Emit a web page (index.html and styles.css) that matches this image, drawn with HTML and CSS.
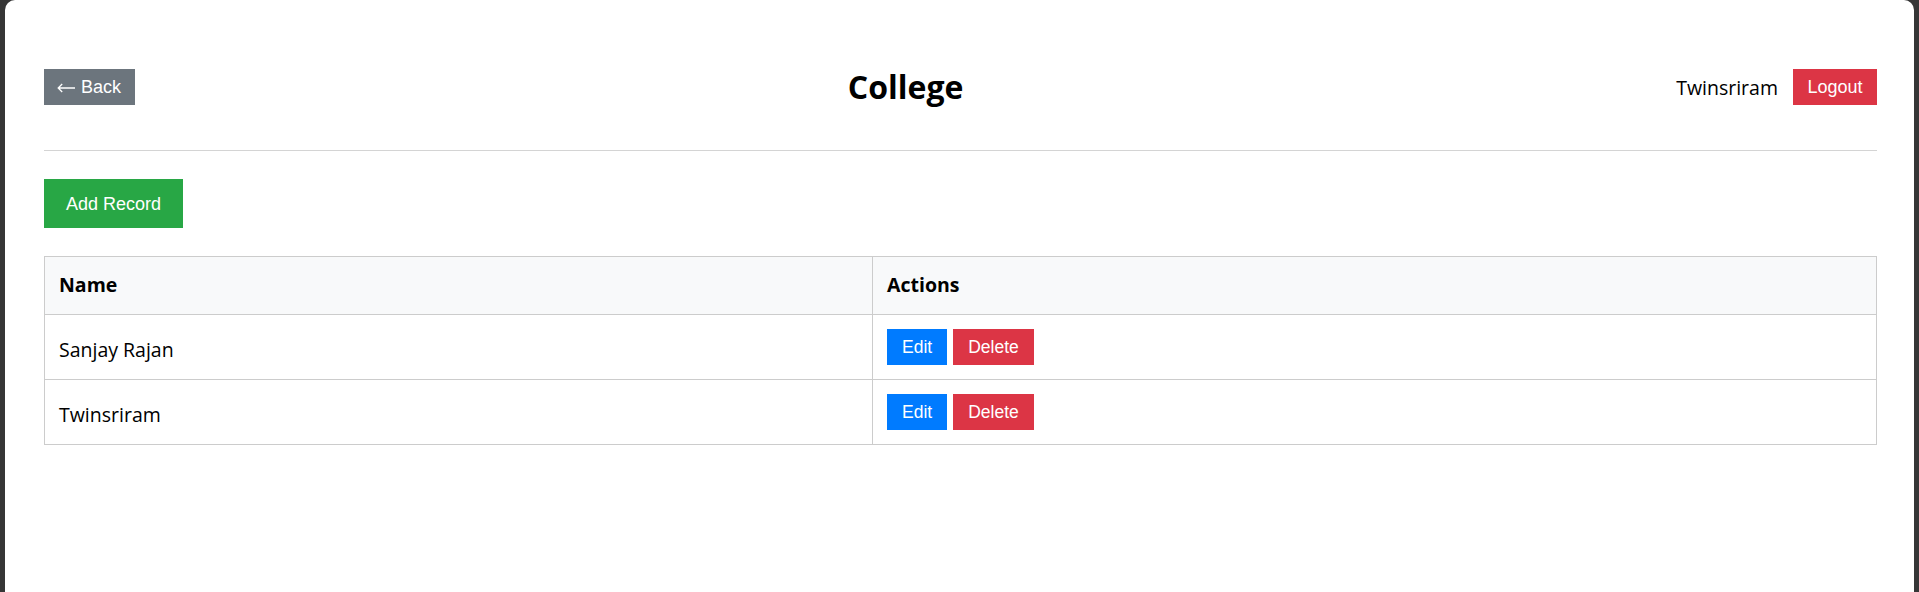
FILE: index.html
```html
<!DOCTYPE html>
<html lang="en">
<head>
<meta charset="utf-8">
<title>College</title>
<link rel="stylesheet" href="styles.css">
</head>
<body>
<div class="window">
  <header class="header">
    <button class="btn btn-back"><svg class="arrow" width="18" height="10" viewBox="0 0 18 10"><path d="M1.2 5 H18 M5.2 1 L1.2 5 L5.2 9" fill="none" stroke="#fff" stroke-width="1.3"/></svg><span>Back</span></button>
    <h1 class="title">College</h1>
    <div class="user">
      <span class="username">Twinsriram</span>
      <button class="btn btn-logout">Logout</button>
    </div>
  </header>
  <button class="btn btn-add">Add Record</button>
  <table class="records">
    <thead>
      <tr><th class="col-name">Name</th><th>Actions</th></tr>
    </thead>
    <tbody>
      <tr>
        <td class="cell-name">Sanjay Rajan</td>
        <td><div class="actions"><button class="btn btn-edit">Edit</button><button class="btn btn-delete">Delete</button></div></td>
      </tr>
      <tr>
        <td class="cell-name">Twinsriram</td>
        <td><div class="actions"><button class="btn btn-edit">Edit</button><button class="btn btn-delete">Delete</button></div></td>
      </tr>
    </tbody>
  </table>
</div>
</body>
</html>
```

FILE: styles.css
```css
html, body {
  margin: 0;
  padding: 0;
  height: 100%;
  background: #363636;
  overflow: hidden;
}
.window {
  box-sizing: border-box;
  margin: 0 5px 0 5px;
  height: 592px;
  background: #ffffff;
  border-radius: 10px 10px 0 0;
  padding: 0 37px 0 39px;
  font-family: "Open Sans", "Noto Sans", sans-serif;
  color: #000;
}
.header {
  display: flex;
  justify-content: space-between;
  align-items: center;
  padding: 65px 0 41px;
  border-bottom: 1px solid #d4d4d4;
}
.title {
  margin: 0;
  font-size: 32px;
  font-weight: 700;
  line-height: 44px;
}
.user {
  display: flex;
  align-items: center;
  gap: 15px;
}
.username {
  font-size: 19.5px;
}
.btn {
  border: none;
  border-radius: 0;
  color: #fff;
  font-family: "Liberation Sans", Arial, sans-serif;
  font-size: 17.5px;
  line-height: 20px;
  cursor: pointer;
  margin: 0;
}
.btn-back {
  display: inline-flex;
  align-items: center;
  gap: 6px;
  background: #6c757d;
  font-size: 18px;
  height: 36px;
  padding: 0 14px 0 13px;
}
.arrow {
  display: block;
  margin-top: 1px;
}
.btn-logout {
  background: #dc3545;
  font-size: 18px;
  height: 36px;
  padding: 0 14.5px;
}
.btn-add {
  display: block;
  margin-top: 28px;
  background: #28a745;
  font-size: 18px;
  height: 49px;
  padding: 0 22px;
}
.btn-edit {
  background: #007bff;
  height: 36px;
  padding: 0 15px;
}
.btn-delete {
  background: #dc3545;
  height: 36px;
  padding: 0 15px;
}
.records {
  margin-top: 28px;
  width: 100%;
  border-collapse: collapse;
  font-size: 19.5px;
}
.records th,
.records td {
  border: 1px solid #cccccc;
  padding: 14px;
  text-align: left;
  vertical-align: middle;
  line-height: 28px;
}
.records th {
  background: #f8f9fa;
  font-weight: 700;
  padding-bottom: 15px;
}
.records td.cell-name {
  padding-top: 17px;
  padding-bottom: 11px;
}
.col-name {
  width: 45.2%;
}
.actions {
  display: flex;
  gap: 6px;
}
```
